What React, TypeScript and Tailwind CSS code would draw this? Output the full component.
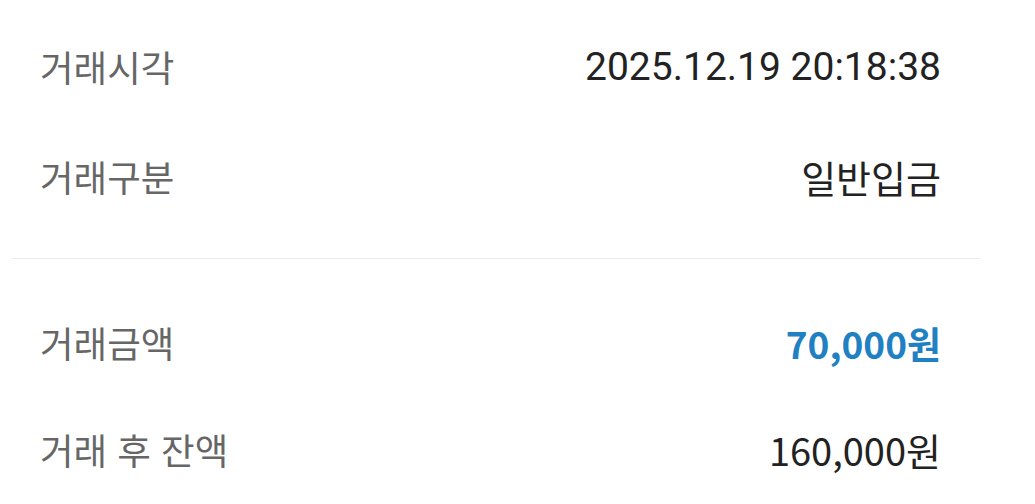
export default function App() {
  const label = "text-[36.5px] leading-none text-[#666666] [word-spacing:2px]";
  return (
    <div className="w-[1035px] h-[504px] bg-white overflow-hidden font-['Noto_Sans_CJK_KR',sans-serif]">
      <div className="w-[968px] ml-[12px]">
        <div className="pt-[12px] pb-[26px] pl-[28px] pr-[39px]">
          <div className="h-[110px] flex items-center justify-between">
            <span className={label}>거래시각</span>
            <span className="text-[39px] leading-none text-[#222222] font-['Roboto',sans-serif]">2025.12.19 20:18:38</span>
          </div>
          <div className="h-[110px] flex items-center justify-between">
            <span className={label}>거래구분</span>
            <span className="text-[38px] leading-none text-[#222222]">일반입금</span>
          </div>
        </div>
        <div className="h-px bg-[#ebebeb]" />
        <div className="pt-[29px] pl-[28px] pr-[39px]">
          <div className="h-[110px] flex items-center justify-between">
            <span className={label}>거래금액</span>
            <span className="text-[37px] leading-none font-bold text-[#1f80c2]">70,000원</span>
          </div>
          <div className="h-[110px] flex items-center justify-between -mt-[3px]">
            <span className={label}>거래 후 잔액</span>
            <span className="text-[38px] leading-none text-[#222222]">160,000원</span>
          </div>
        </div>
      </div>
    </div>
  );
}
